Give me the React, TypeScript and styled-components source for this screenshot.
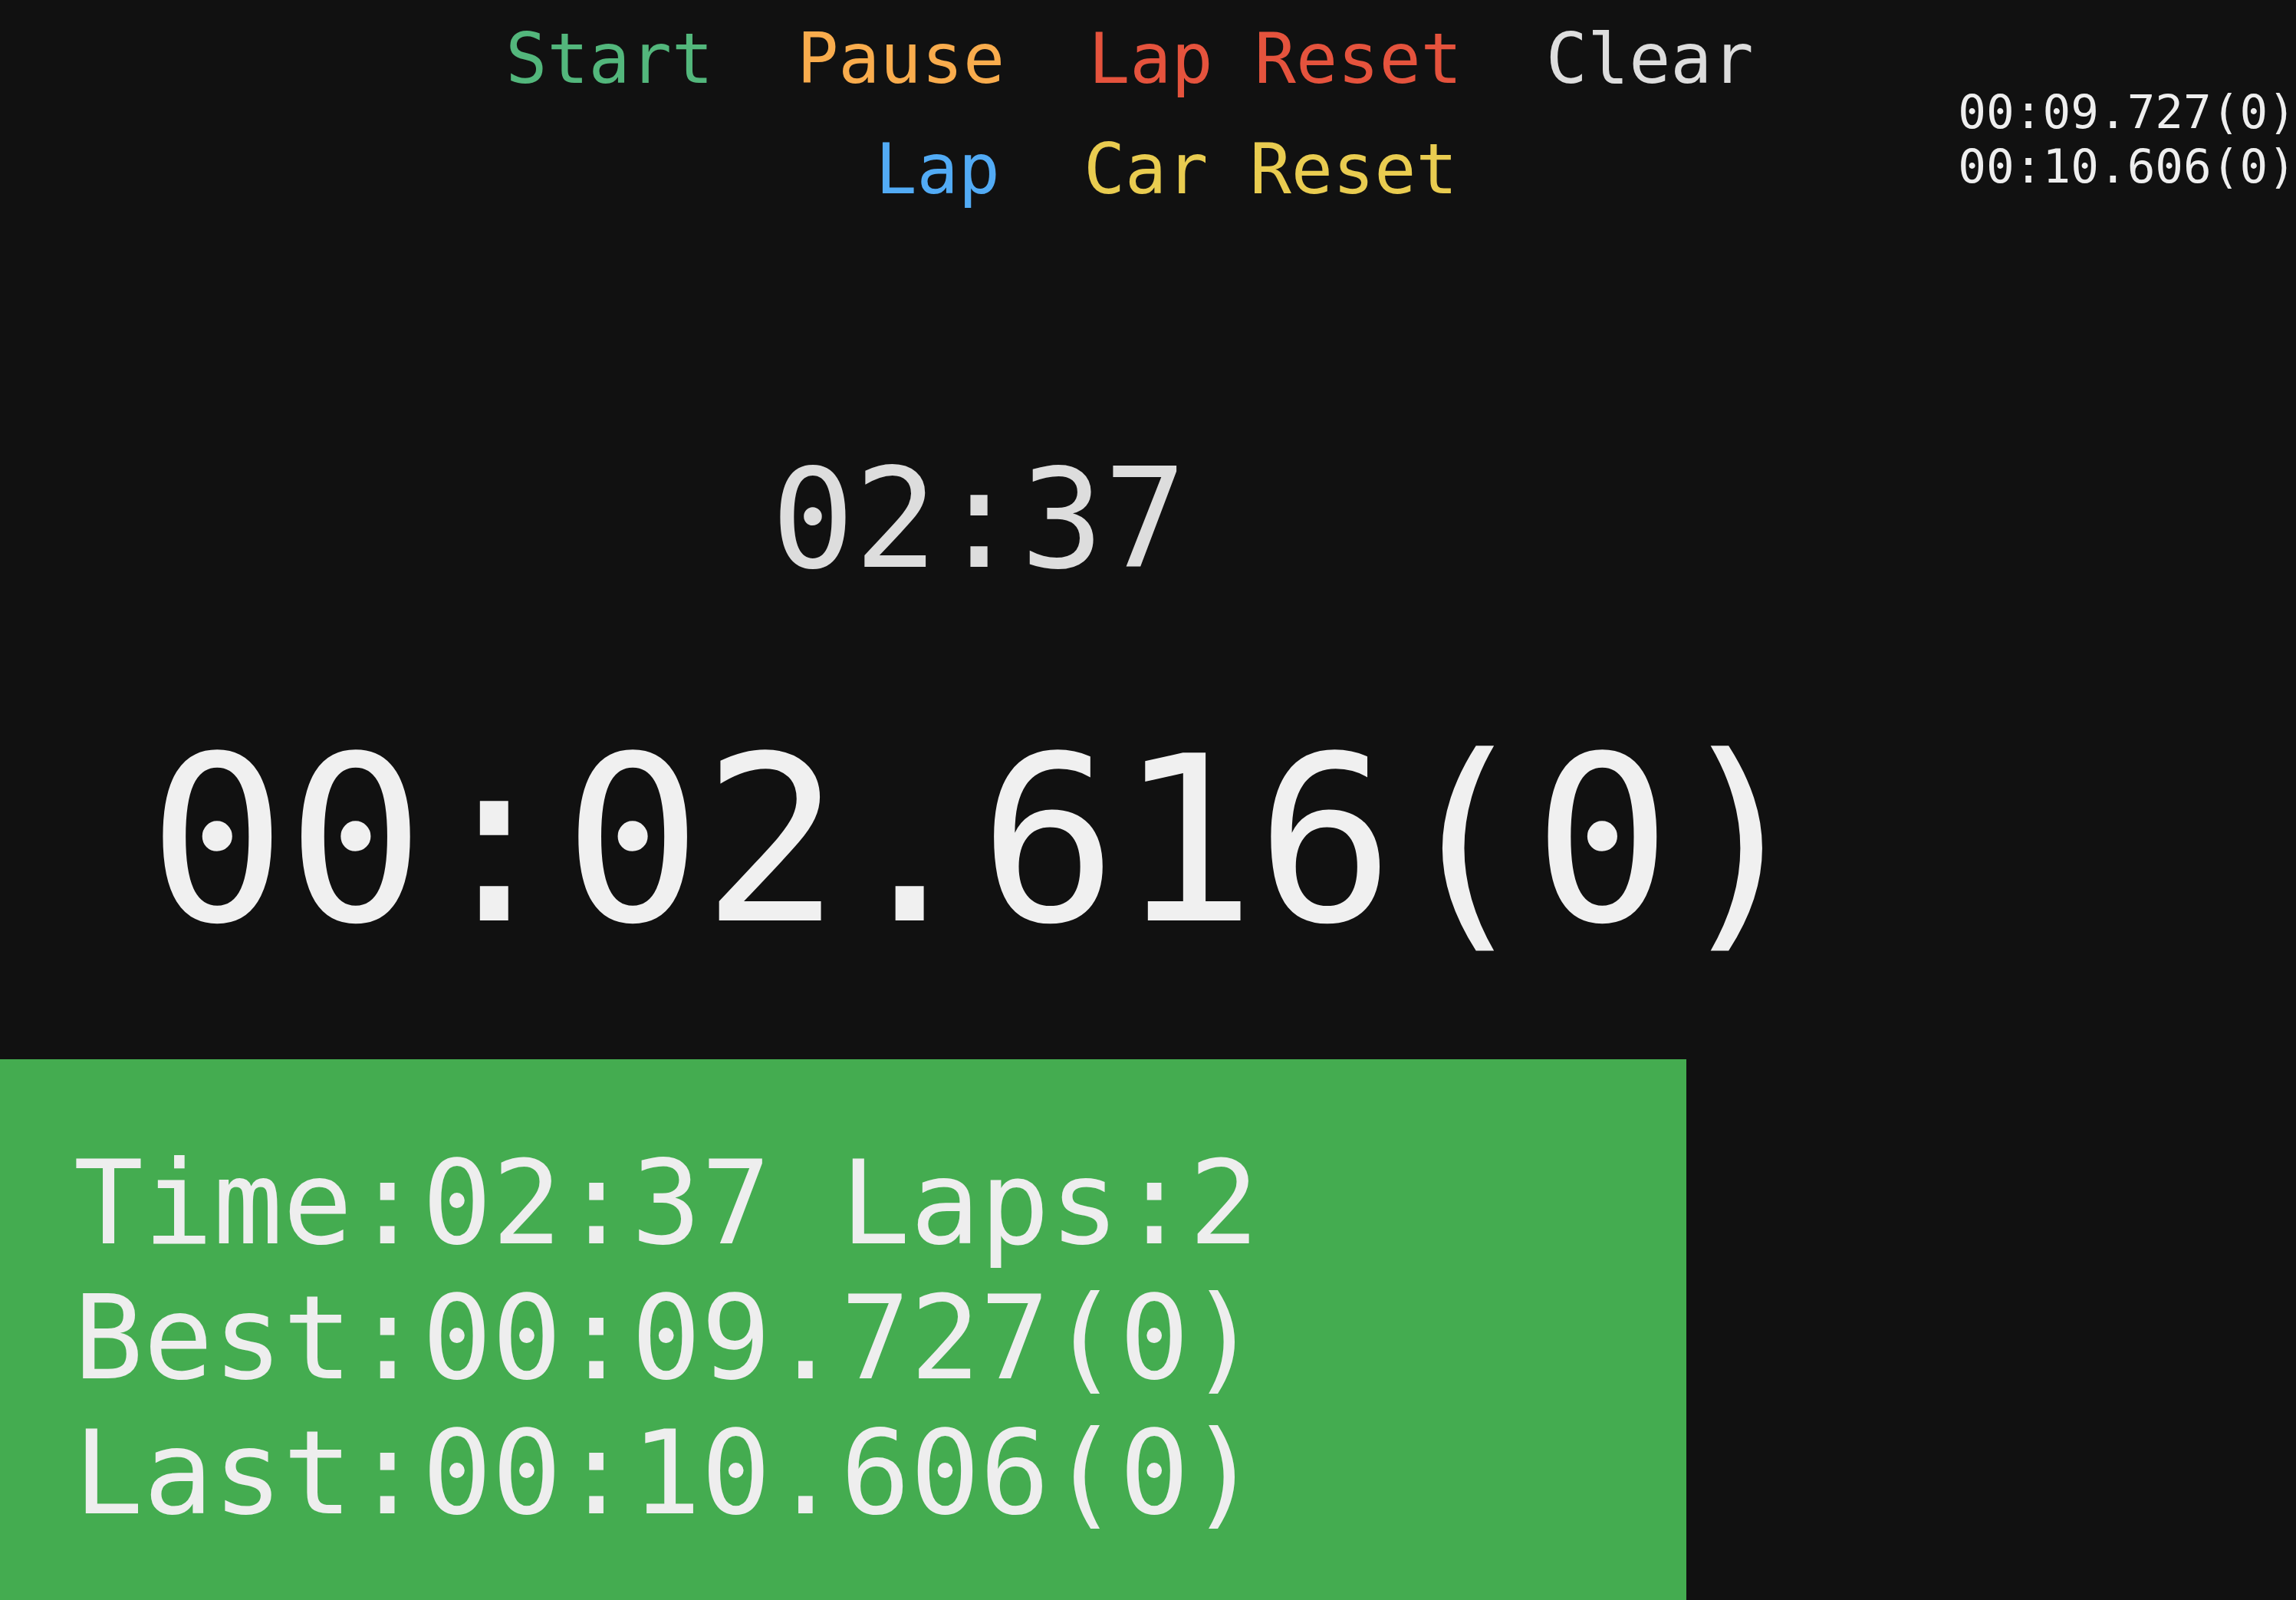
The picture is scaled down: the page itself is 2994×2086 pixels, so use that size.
import React from "react";
import styled, { createGlobalStyle } from "styled-components";

const GlobalStyle = createGlobalStyle`
  html, body {
    margin: 0;
    padding: 0;
    background: #111111;
    overflow: hidden;
  }
  body {
    font-family: "DejaVu Sans Mono", "Liberation Mono", monospace;
  }
`;

const Page = styled.div`
  display: grid;
  grid-template-columns: 1fr auto;
  grid-template-rows: auto 1fr;
  min-height: 100vh;
  background: #111111;
`;

const ButtonBar = styled.div`
  grid-row: 1;
  grid-column: 1 / -1;
  display: flex;
  flex-direction: column;
  gap: 39px;
  padding-top: 24px;
`;

const ButtonRow = styled.div<{ $shift: number }>`
  display: flex;
  justify-content: center;
  gap: 109px;
  padding-left: ${(p) => (p.$shift > 0 ? p.$shift * 2 : 0)}px;
  padding-right: ${(p) => (p.$shift < 0 ? -p.$shift * 2 : 0)}px;
`;

const ActionButton = styled.button<{ $color: string }>`
  appearance: none;
  background: none;
  border: none;
  padding: 0;
  margin: 0;
  font-family: "DejaVu Sans Mono", "Liberation Mono", monospace;
  font-size: 90px;
  line-height: normal;
  color: ${(p) => p.$color};
  cursor: pointer;
  white-space: pre;
`;

const LapList = styled.div`
  grid-column: 2;
  grid-row: 1 / span 2;
  align-self: start;
  margin-top: 110px;
  font-size: 61px;
  line-height: normal;
  color: #eeeeee;
  white-space: pre;
`;

const LapItem = styled.div``;

const Main = styled.div`
  grid-row: 2;
  grid-column: 1;
  display: flex;
  flex-direction: column;
  align-items: center;
  padding-top: 299px;
`;

const Clock = styled.div`
  font-size: 180px;
  line-height: normal;
  color: #dddddd;
`;

const LapTimer = styled.div`
  margin-top: 141px;
  font-size: 300px;
  line-height: normal;
  color: #f0f0f0;
  white-space: pre;
`;

const Summary = styled.div`
  align-self: flex-start;
  width: 2199px;
  box-sizing: border-box;
  margin-top: 110px;
  padding: 100px 96px 77px;
  background: #44ac50;
  color: #eeeeee;
  font-size: 151px;
  line-height: normal;
  white-space: pre;
`;

const SummaryLine = styled.div``;

const row1 = [
  { label: "Start", color: "#53b77c" },
  { label: "Pause", color: "#f9ac4d" },
  { label: "Lap Reset", color: "#e5533d" },
  { label: "Clear", color: "#dddddd" },
];

const row2 = [
  { label: "Lap", color: "#52abf5" },
  { label: "Car Reset", color: "#e9cc50" },
];

const laps = ["00:09.727(0)", "00:10.606(0)"];

export default function App() {
  return (
    <>
      <GlobalStyle />
      <Page>
        <ButtonBar>
          <ButtonRow $shift={-24}>
            {row1.map((b) => (
              <ActionButton key={b.label} $color={b.color}>
                {b.label}
              </ActionButton>
            ))}
          </ButtonRow>
          <ButtonRow $shift={24}>
            {row2.map((b) => (
              <ActionButton key={b.label} $color={b.color}>
                {b.label}
              </ActionButton>
            ))}
          </ButtonRow>
        </ButtonBar>
        <LapList>
          {laps.map((l) => (
            <LapItem key={l}>{l}</LapItem>
          ))}
        </LapList>
        <Main>
          <Clock>02:37</Clock>
          <LapTimer>00:02.616(0)</LapTimer>
          <Summary>
            <SummaryLine>Time:02:37 Laps:2</SummaryLine>
            <SummaryLine>Best:00:09.727(0)</SummaryLine>
            <SummaryLine>Last:00:10.606(0)</SummaryLine>
          </Summary>
        </Main>
      </Page>
    </>
  );
}
